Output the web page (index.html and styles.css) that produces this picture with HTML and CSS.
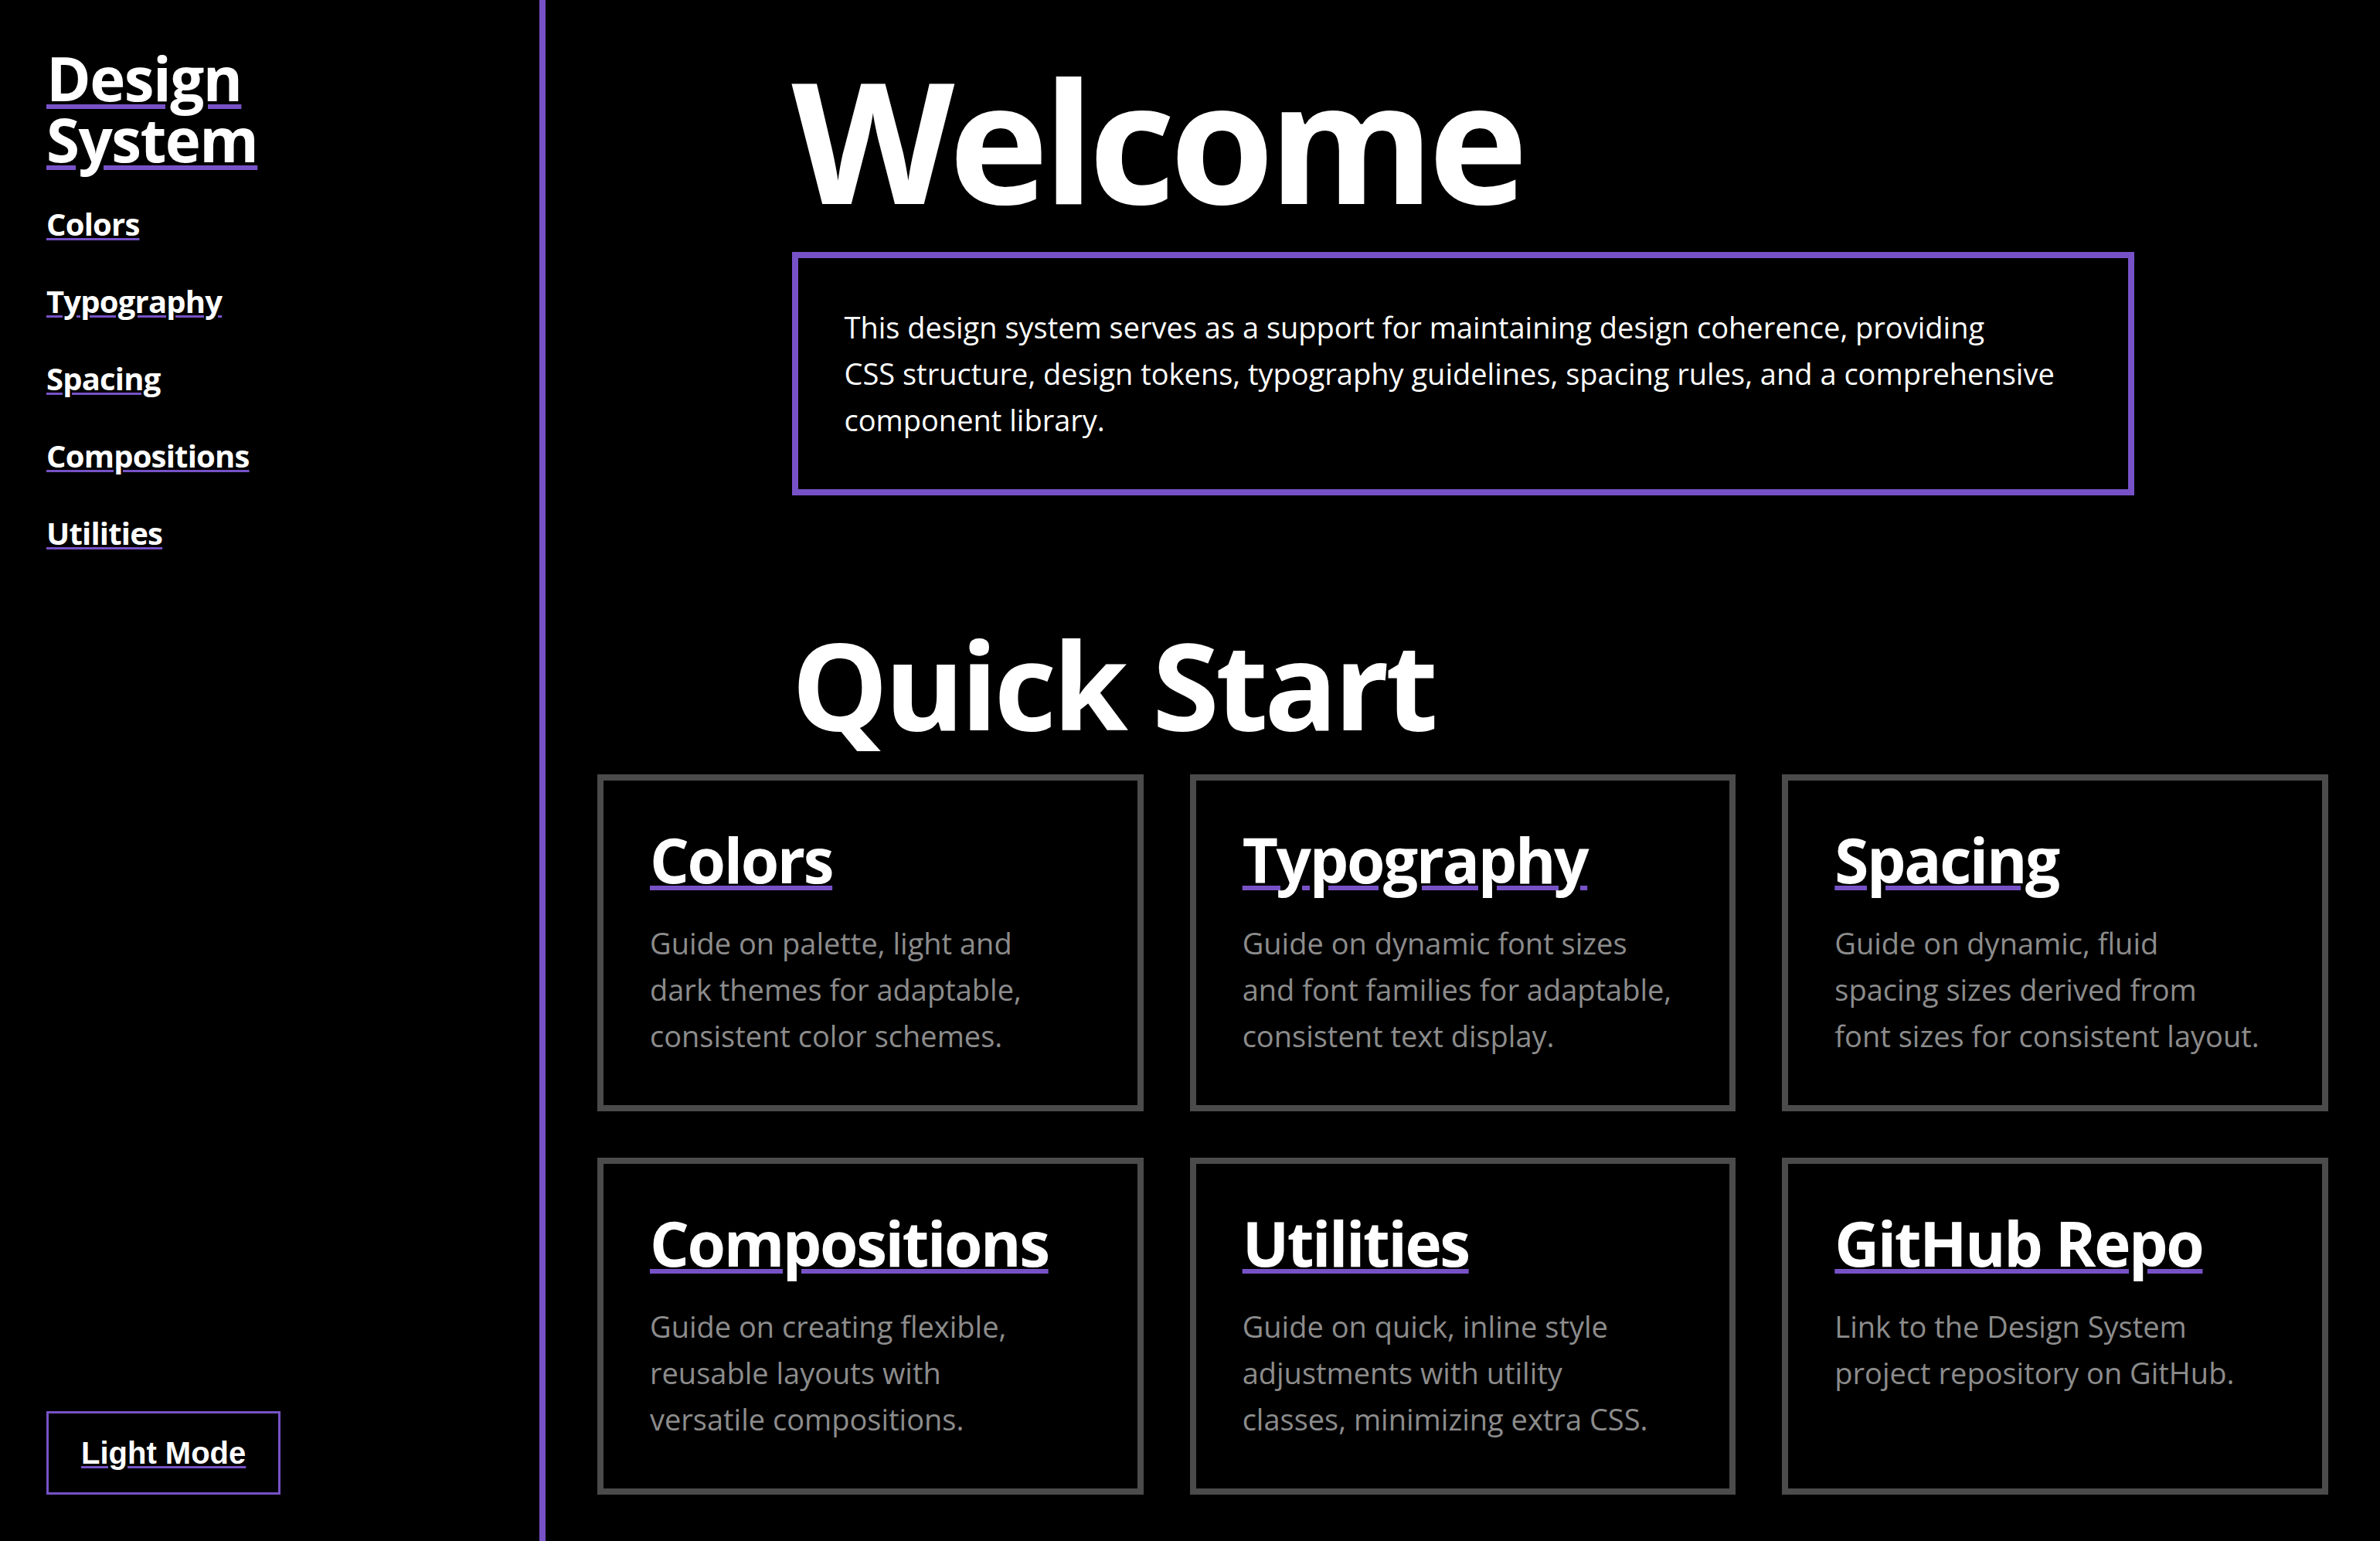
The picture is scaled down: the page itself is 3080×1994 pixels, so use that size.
FILE: index.html
```html
<!DOCTYPE html>
<html lang="en">
<head>
<meta charset="utf-8">
<title>Design System</title>
<link rel="stylesheet" href="styles.css">
</head>
<body>
<div class="layout">
  <aside class="sidebar">
    <a class="brand" href="#">Design<br>System</a>
    <nav class="nav">
      <a class="nav-link" href="#">Colors</a>
      <a class="nav-link" href="#">Typography</a>
      <a class="nav-link" href="#">Spacing</a>
      <a class="nav-link" href="#">Compositions</a>
      <a class="nav-link" href="#">Utilities</a>
    </nav>
    <button class="theme-btn" type="button"><span class="theme-label">Light Mode</span></button>
  </aside>
  <main class="main">
    <div class="intro">
      <h1 class="hero-title">Welcome</h1>
      <div class="intro-box">
        <p class="intro-text">This design system serves as a support for maintaining design coherence, providing<br>CSS structure, design tokens, typography guidelines, spacing rules, and a comprehensive<br>component library.</p>
      </div>
      <h2 class="section-title">Quick Start</h2>
    </div>
    <div class="cards">
      <article class="card">
        <h3 class="card-title"><a href="#">Colors</a></h3>
        <p class="card-text">Guide on palette, light and<br>dark themes for adaptable,<br>consistent color schemes.</p>
      </article>
      <article class="card">
        <h3 class="card-title"><a href="#">Typography</a></h3>
        <p class="card-text">Guide on dynamic font sizes<br>and font families for adaptable,<br>consistent text display.</p>
      </article>
      <article class="card">
        <h3 class="card-title"><a href="#">Spacing</a></h3>
        <p class="card-text">Guide on dynamic, fluid<br>spacing sizes derived from<br>font sizes for consistent layout.</p>
      </article>
      <article class="card">
        <h3 class="card-title"><a href="#">Compositions</a></h3>
        <p class="card-text">Guide on creating flexible,<br>reusable layouts with<br>versatile compositions.</p>
      </article>
      <article class="card">
        <h3 class="card-title"><a href="#">Utilities</a></h3>
        <p class="card-text">Guide on quick, inline style<br>adjustments with utility<br>classes, minimizing extra CSS.</p>
      </article>
      <article class="card">
        <h3 class="card-title"><a href="#">GitHub Repo</a></h3>
        <p class="card-text">Link to the Design System<br>project repository on GitHub.</p>
      </article>
    </div>
  </main>
</div>
</body>
</html>
```
FILE: styles.css
```css
* { box-sizing: border-box; }

html, body {
  margin: 0;
  background: #000;
  color: #fff;
  font-family: "Open Sans", "Noto Sans", sans-serif;
}

a { color: #fff; }

.layout {
  display: grid;
  grid-template-columns: 706px 1fr;
  min-height: 100vh;
}

.sidebar {
  display: flex;
  flex-direction: column;
  align-items: flex-start;
  padding: 62px 60px 60px;
  border-right: 8px solid #7752c7;
  min-height: 100vh;
}

.brand {
  font-size: 78px;
  line-height: 79px;
  font-weight: 700;
  letter-spacing: -0.02em;
  text-decoration: underline #7752c7 6px;
  text-underline-offset: 4px;
}

.nav {
  display: flex;
  flex-direction: column;
  align-items: flex-start;
  gap: 54px;
  margin-top: 47px;
}

.nav-link {
  font-size: 40px;
  line-height: 46px;
  font-weight: 700;
  letter-spacing: -0.02em;
  text-decoration: underline #7752c7 3px;
  text-underline-offset: 3px;
}

.theme-btn {
  margin-top: auto;
  padding: 29px 42px 28px;
  background: transparent;
  border: 3px solid #7752c7;
  color: #fff;
  font-family: "Liberation Sans", Arial, sans-serif;
  font-weight: 700;
  font-size: 40px;
  line-height: 45px;
  cursor: pointer;
}

.theme-label {
  text-decoration: underline #7752c7 3px;
  text-underline-offset: 3px;
}

.main {
  padding: 60px 67px 60px;
}

.intro {
  max-width: 1737px;
  margin: 0 auto;
}

.hero-title {
  margin: 11px 0 37px;
  font-size: 218px;
  line-height: 218px;
  font-weight: 700;
  letter-spacing: -0.033em;
}

.intro-box {
  border: 8px solid #7752c7;
  padding: 59px 60px 60px;
}

.intro-text {
  margin: 0;
  font-size: 38px;
  line-height: 60px;
}

.section-title {
  margin: 165px 0 39px;
  font-size: 157px;
  line-height: 157px;
  font-weight: 700;
  letter-spacing: -0.03em;
}

.cards {
  display: grid;
  grid-template-columns: repeat(3, 1fr);
  gap: 60px;
}

.card {
  border: 8px solid #4b4b4b;
  padding: 60px;
}

.card-title {
  margin: 0 0 36px;
  font-size: 80px;
  line-height: 84px;
  font-weight: 700;
  letter-spacing: -0.03em;
}

.card-title a {
  text-decoration: underline #7752c7 6px;
  text-underline-offset: 3px;
}

.card-text {
  margin: 0;
  font-size: 38px;
  line-height: 60px;
  color: #8c8c8c;
}
```
